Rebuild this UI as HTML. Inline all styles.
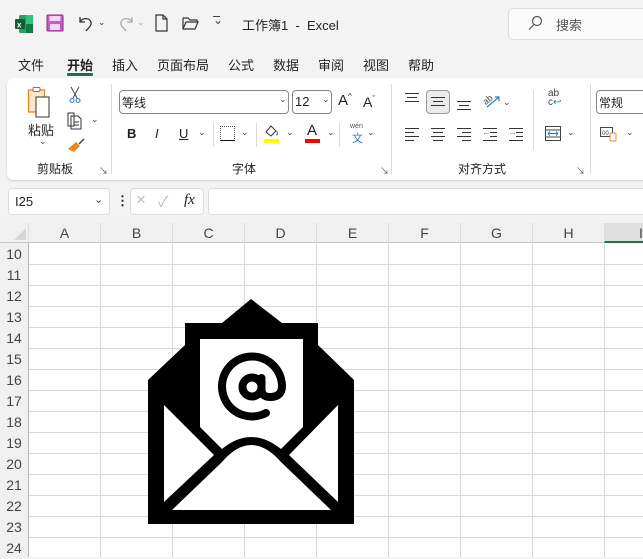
<!DOCTYPE html>
<html><head><meta charset="utf-8"><style>
*{margin:0;padding:0;box-sizing:border-box}
body{width:643px;height:557px;overflow:hidden;background:#f3f3f3;font-family:"Liberation Sans","Noto Sans CJK SC",sans-serif;color:#222;position:relative}
.a{position:absolute}
.t{font-size:13px;white-space:nowrap}
.chev{font-size:9px;color:#444}
.hd{position:absolute;top:223px;height:20px;background:#f0f0f0;border-bottom:1px solid #c8c8c8;font-size:14px;color:#444;text-align:center;line-height:20px}
.rh{position:absolute;left:0;width:28px;height:21px;background:#f0f0f0;font-size:14px;color:#444;text-align:center;line-height:22px}
.ln{position:absolute;height:1px;background:#333}
</style></head><body>
<svg class="a" style="left:14px;top:14px" width="20" height="20" viewBox="0 0 20 20"><rect x="5" y="1" width="14" height="18" rx="1.5" fill="#21a366"/><rect x="12" y="1" width="7" height="9" fill="#33c481"/><rect x="12" y="10" width="7" height="9" fill="#107c41"/><rect x="1" y="5" width="10" height="10" rx="1" fill="#185c37"/><text x="3" y="13.5" font-size="8" fill="#fff" font-family="Liberation Sans" font-weight="bold">x</text></svg>
<svg class="a" style="left:46px;top:14px" width="18" height="18" viewBox="0 0 18 18"><rect x="1" y="1" width="16" height="16" rx="1" fill="#c45ec4"/><rect x="3.5" y="2" width="11" height="5" fill="#f3d6f3"/><rect x="4" y="10" width="10" height="6" fill="#f3d6f3"/><rect x="1" y="1" width="16" height="16" rx="1" fill="none" stroke="#8a2d8a" stroke-width="1"/></svg>
<svg class="a" style="left:77px;top:13px" width="20" height="20" viewBox="0 0 20 20" fill="none" stroke="#333" stroke-width="1.3"><path d="M3 4v5h5"/><path d="M3 9c2-4 9-5 11 0 1 4-3 6-5 9"/></svg>
<span class="a chev" style="left:98px;top:17px">⌄</span>
<svg class="a" style="left:115px;top:13px" width="20" height="20" viewBox="0 0 20 20" fill="none" stroke="#aaa" stroke-width="1.3"><path d="M17 4v5h-5"/><path d="M17 9c-2-4-9-5-11 0-1 4 3 6 5 9"/></svg>
<span class="a chev" style="left:137px;top:17px;color:#aaa">⌄</span>
<svg class="a" style="left:154px;top:14px" width="16" height="18" viewBox="0 0 16 18" fill="none" stroke="#333" stroke-width="1.2"><path d="M2 1h7l4 4v12H2z M9 1v4h4"/></svg>
<svg class="a" style="left:181px;top:15px" width="20" height="16" viewBox="0 0 20 16" fill="none" stroke="#333" stroke-width="1.2"><path d="M2 3h5l2 2h7v2 M2 3v11h12l3-7H5l-3 7"/></svg>
<span class="a" style="left:213px;top:13px;font-size:12px;color:#444">⌄</span>
<div class="a" style="left:213px;top:16px;width:7px;height:1px;background:#444"></div>
<span class="a t" style="left:242px;top:15px">工作簿1 &nbsp;-&nbsp; Excel</span>
<div class="a" style="left:508px;top:8px;width:145px;height:32px;background:#fafafa;border:1px solid #ddd;border-radius:5px"></div>
<svg class="a" style="left:527px;top:15px" width="16" height="16" viewBox="0 0 16 16" fill="none" stroke="#555" stroke-width="1.2"><circle cx="10" cy="6" r="4.5"/><path d="M7 9.5L2 14.5"/></svg>
<span class="a t" style="left:556px;top:15px;color:#555">搜索</span>
<span class="a t" style="left:18px;top:55px">文件</span>
<span class="a t" style="left:67px;top:55px;font-weight:bold">开始</span>
<div class="a" style="left:67px;top:73px;width:26px;height:3px;background:#1f6e43;border-radius:1px"></div>
<span class="a t" style="left:112px;top:55px">插入</span>
<span class="a t" style="left:157px;top:55px">页面布局</span>
<span class="a t" style="left:228px;top:55px">公式</span>
<span class="a t" style="left:273px;top:55px">数据</span>
<span class="a t" style="left:318px;top:55px">审阅</span>
<span class="a t" style="left:363px;top:55px">视图</span>
<span class="a t" style="left:408px;top:55px">帮助</span>
<div class="a" style="left:7px;top:78px;width:650px;height:102px;background:#fff;border-radius:7px;box-shadow:0 1px 2px rgba(0,0,0,.15)"></div>
<div class="a" style="left:111px;top:84px;width:1px;height:90px;background:#ddd"></div>
<div class="a" style="left:391px;top:84px;width:1px;height:90px;background:#ddd"></div>
<div class="a" style="left:590px;top:84px;width:1px;height:90px;background:#ddd"></div>
<div class="a" style="left:533px;top:90px;width:1px;height:60px;background:#ddd"></div>
<svg class="a" style="left:27px;top:86px" width="24" height="32" viewBox="0 0 24 32"><rect x="1.5" y="4" width="16" height="22" fill="#fde7c8" stroke="#e8871e" stroke-width="1.3"/><rect x="6" y="1.5" width="7" height="4" rx="1" fill="#fff" stroke="#777"/><rect x="9" y="11" width="13" height="20" fill="#fff" stroke="#333"/></svg>
<span class="a t" style="left:28px;top:120px">粘贴</span>
<span class="a chev" style="left:39px;top:136px">⌄</span>
<svg class="a" style="left:68px;top:86px" width="14" height="18" viewBox="0 0 14 18" fill="none" stroke="#444" stroke-width="1"><path d="M3 1l6 11 M11 1L5 12"/><circle cx="4" cy="14.5" r="2" stroke="#2b7cd3"/><circle cx="10" cy="14.5" r="2" stroke="#2b7cd3"/></svg>
<svg class="a" style="left:67px;top:112px" width="16" height="18" viewBox="0 0 16 18" fill="none" stroke="#333" stroke-width="1"><path d="M1 1h6v13H1z"/><path d="M4 4h7l3 3v10H4z"/><path d="M7 10h5M7 13h5"/></svg>
<span class="a chev" style="left:91px;top:114px">⌄</span>
<svg class="a" style="left:67px;top:137px" width="18" height="16" viewBox="0 0 18 16"><path d="M9 5l4 4-6 6-6-3z" fill="#e8871e"/><path d="M12 7l5-5" stroke="#444" stroke-width="1.5"/></svg>
<span class="a t" style="left:37px;top:160px;font-size:12px">剪贴板</span>
<span class="a" style="left:99px;top:164px;font-size:9px;color:#555">↘</span>
<div class="a" style="left:119px;top:90px;width:170px;height:24px;border:1px solid #888;border-radius:4px"></div>
<span class="a t" style="left:122px;top:94px;font-size:12px">等线</span>
<span class="a chev" style="left:279px;top:94px">⌄</span>
<div class="a" style="left:292px;top:90px;width:40px;height:24px;border:1px solid #888;border-radius:4px"></div>
<span class="a t" style="left:295px;top:94px">12</span>
<span class="a chev" style="left:322px;top:94px">⌄</span>
<span class="a t" style="left:338px;top:92px;font-size:15px">A<sup style="font-size:8px">^</sup></span>
<span class="a t" style="left:363px;top:94px;font-size:14px">A<sup style="font-size:8px">ˇ</sup></span>
<span class="a t" style="left:127px;top:126px;font-weight:bold">B</span>
<span class="a t" style="left:155px;top:126px;font-style:italic">I</span>
<span class="a t" style="left:179px;top:126px;text-decoration:underline">U</span>
<span class="a chev" style="left:198px;top:127px">⌄</span>
<div class="a" style="left:213px;top:123px;width:1px;height:24px;background:#ddd"></div>
<div class="a" style="left:220px;top:126px;width:15px;height:15px;border:1px dotted #555;border-bottom:1.5px solid #111"></div>
<span class="a chev" style="left:241px;top:127px">⌄</span>
<div class="a" style="left:256px;top:123px;width:1px;height:24px;background:#ddd"></div>
<svg class="a" style="left:264px;top:124px" width="16" height="14" viewBox="0 0 16 14" fill="none" stroke="#333" stroke-width="1"><path d="M2 8l5-6 5 5-5 5z"/><path d="M12 7c2 1 2 4 0 4" stroke="#2b7cd3"/></svg>
<div class="a" style="left:264px;top:139px;width:15px;height:4px;background:#ffff00"></div>
<span class="a chev" style="left:286px;top:127px">⌄</span>
<span class="a t" style="left:307px;top:122px;font-size:15px">A</span>
<div class="a" style="left:305px;top:139px;width:15px;height:4px;background:#f00"></div>
<span class="a chev" style="left:327px;top:127px">⌄</span>
<div class="a" style="left:339px;top:123px;width:1px;height:24px;background:#ddd"></div>
<span class="a" style="left:350px;top:123px;font-size:7px;color:#555">wén</span>
<span class="a" style="left:352px;top:130px;font-size:11px;color:#2b7cd3">文</span>
<span class="a chev" style="left:367px;top:127px">⌄</span>
<span class="a t" style="left:232px;top:160px;font-size:12px">字体</span>
<span class="a" style="left:380px;top:164px;font-size:9px;color:#555">↘</span>
<div class="ln" style="left:405px;top:93px;width:14px"></div><div class="ln" style="left:407px;top:97px;width:10px"></div><div class="ln" style="left:405px;top:101px;width:14px"></div>
<div class="a" style="left:426px;top:90px;width:24px;height:24px;background:#ebebeb;border:1px solid #999;border-radius:4px"></div>
<div class="ln" style="left:431px;top:97px;width:14px"></div><div class="ln" style="left:433px;top:101px;width:10px"></div><div class="ln" style="left:431px;top:105px;width:14px"></div>
<div class="ln" style="left:457px;top:101px;width:14px"></div><div class="ln" style="left:459px;top:105px;width:10px"></div><div class="ln" style="left:457px;top:109px;width:14px"></div>
<svg class="a" style="left:481px;top:91px" width="20" height="18" viewBox="0 0 20 18" fill="none" stroke-width="1.2"><text x="1" y="12" font-size="9" fill="#444" stroke="none" transform="rotate(-40 6 8)" font-family="Liberation Sans">ab</text><path d="M6 16L18 6M14 6h4v4" stroke="#2b7cd3"/></svg>
<span class="a chev" style="left:503px;top:97px">⌄</span>
<div class="ln" style="left:405px;top:128px;width:14px"></div><div class="ln" style="left:405px;top:132px;width:9px"></div><div class="ln" style="left:405px;top:136px;width:14px"></div><div class="ln" style="left:405px;top:140px;width:9px"></div>
<div class="ln" style="left:431px;top:128px;width:14px"></div><div class="ln" style="left:433px;top:132px;width:10px"></div><div class="ln" style="left:431px;top:136px;width:14px"></div><div class="ln" style="left:433px;top:140px;width:10px"></div>
<div class="ln" style="left:457px;top:128px;width:14px"></div><div class="ln" style="left:462px;top:132px;width:9px"></div><div class="ln" style="left:457px;top:136px;width:14px"></div><div class="ln" style="left:462px;top:140px;width:9px"></div>
<div class="ln" style="left:483px;top:128px;width:14px"></div><div class="ln" style="left:490px;top:132px;width:7px"></div><div class="ln" style="left:490px;top:136px;width:7px"></div><div class="ln" style="left:483px;top:140px;width:14px"></div>
<span class="a" style="left:482px;top:127px;font-size:9px;color:#2b7cd3">←</span>
<div class="ln" style="left:509px;top:128px;width:14px"></div><div class="ln" style="left:516px;top:132px;width:7px"></div><div class="ln" style="left:516px;top:136px;width:7px"></div><div class="ln" style="left:509px;top:140px;width:14px"></div>
<span class="a" style="left:508px;top:127px;font-size:9px;color:#2b7cd3">→</span>
<span class="a" style="left:548px;top:89px;font-size:10px;line-height:9px;color:#444">ab<br>c<span style="color:#2b7cd3">↩</span></span>
<svg class="a" style="left:545px;top:126px" width="16" height="15" viewBox="0 0 16 15" fill="none" stroke-width="1"><rect x="0.5" y="0.5" width="15" height="14" stroke="#444"/><path d="M0 4h16M0 11h16" stroke="#444"/><path d="M3 7.5h10M3 7.5l2-2M3 7.5l2 2M13 7.5l-2-2M13 7.5l-2 2" stroke="#2b7cd3"/></svg>
<span class="a chev" style="left:567px;top:127px">⌄</span>
<span class="a t" style="left:458px;top:160px;font-size:12px">对齐方式</span>
<span class="a" style="left:576px;top:164px;font-size:9px;color:#555">↘</span>
<div class="a" style="left:596px;top:90px;width:60px;height:24px;border:1px solid #888;border-radius:4px"></div>
<span class="a t" style="left:599px;top:94px;font-size:12px">常规</span>
<svg class="a" style="left:600px;top:126px" width="18" height="16" viewBox="0 0 18 16" fill="none"><rect x="0.5" y="1.5" width="12" height="9" stroke="#444"/><text x="2" y="9" font-size="6" fill="#444" font-family="Liberation Sans">00</text><rect x="10" y="7" width="6" height="8" rx="1" stroke="#e8871e" fill="#fff"/></svg>
<span class="a chev" style="left:626px;top:127px">⌄</span>
<div class="a" style="left:8px;top:188px;width:102px;height:27px;background:#fff;border:1px solid #ddd;border-radius:4px"></div>
<span class="a t" style="left:15px;top:194px">I25</span>
<span class="a chev" style="left:94px;top:193px;font-size:11px">⌄</span>
<span class="a t" style="left:116px;top:193px;font-weight:bold">⋮</span>
<div class="a" style="left:130px;top:188px;width:74px;height:27px;background:#fff;border:1px solid #ddd;border-radius:4px"></div>
<span class="a" style="left:136px;top:190px;font-size:17px;color:#bbb">×</span>
<span class="a" style="left:158px;top:191px;font-size:15px;color:#bbb">✓</span>
<span class="a" style="left:184px;top:192px;font-size:15px;font-style:italic;font-family:'Liberation Serif',serif">fx</span>
<div class="a" style="left:208px;top:188px;width:445px;height:27px;background:#fff;border:1px solid #ddd;border-radius:4px"></div>
<div class="a" style="left:0;top:223px;width:643px;height:334px;background:#fff"></div>
<div class="a" style="left:29px;top:244px;width:614px;height:313px;background-image:linear-gradient(to right,transparent 71px,#dadada 71px),linear-gradient(to bottom,transparent 20px,#dadada 20px);background-size:72px 100%,100% 21px"></div>
<div class="hd" style="left:0;width:28px"></div>
<svg class="a" style="left:14px;top:228px" width="12" height="12"><path d="M12 0V12H0z" fill="#d6d6d6"/></svg>
<div class="hd" style="left:28px;width:72px;border-left:1px solid #ddd">A</div>
<div class="hd" style="left:100px;width:72px;border-left:1px solid #ddd">B</div>
<div class="hd" style="left:172px;width:72px;border-left:1px solid #ddd">C</div>
<div class="hd" style="left:244px;width:72px;border-left:1px solid #ddd">D</div>
<div class="hd" style="left:316px;width:72px;border-left:1px solid #ddd">E</div>
<div class="hd" style="left:388px;width:72px;border-left:1px solid #ddd">F</div>
<div class="hd" style="left:460px;width:72px;border-left:1px solid #ddd">G</div>
<div class="hd" style="left:532px;width:72px;border-left:1px solid #ddd">H</div>
<div class="hd" style="left:604px;width:72px;border-left:1px solid #ddd;background:#e0e0e0;border-bottom:2px solid #1f7244;text-align:left;padding-left:34px">I</div>
<div class="a" style="left:28px;top:243px;width:1px;height:314px;background:#b8b8b8"></div>
<div class="rh" style="top:243px">10</div><div class="rh" style="top:264px">11</div><div class="rh" style="top:285px">12</div><div class="rh" style="top:306px">13</div><div class="rh" style="top:327px">14</div><div class="rh" style="top:348px">15</div><div class="rh" style="top:369px">16</div><div class="rh" style="top:390px">17</div><div class="rh" style="top:411px">18</div><div class="rh" style="top:432px">19</div><div class="rh" style="top:453px">20</div><div class="rh" style="top:474px">21</div><div class="rh" style="top:495px">22</div><div class="rh" style="top:516px">23</div><div class="rh" style="top:537px">24</div>
<svg class="a" style="left:0;top:0" width="643" height="557" viewBox="0 0 643 557">
<path d="M148 380L185 345V323H222L251 299L282 323H318V345L354 380V524H148Z" fill="#000"/>
<path d="M200 339H303V427L281 449Q251 425 222 449L200 427Z" fill="#fff"/>
<path d="M164 405L214 455L164 502Z" fill="#fff"/>
<path d="M338 405L289 455L338 502Z" fill="#fff"/>
<path d="M172 510L222 462Q251 428 281 462L331 510Z" fill="#fff"/>
<g fill="none" stroke="#000" stroke-width="8" stroke-linecap="round">
<circle cx="252" cy="387" r="9.5"/>
<path d="M261.5 378V389Q261.5 397 270 397Q282 397 282 386A30 30 0 1 0 266 413"/>
</g>
</svg>
</body></html>
